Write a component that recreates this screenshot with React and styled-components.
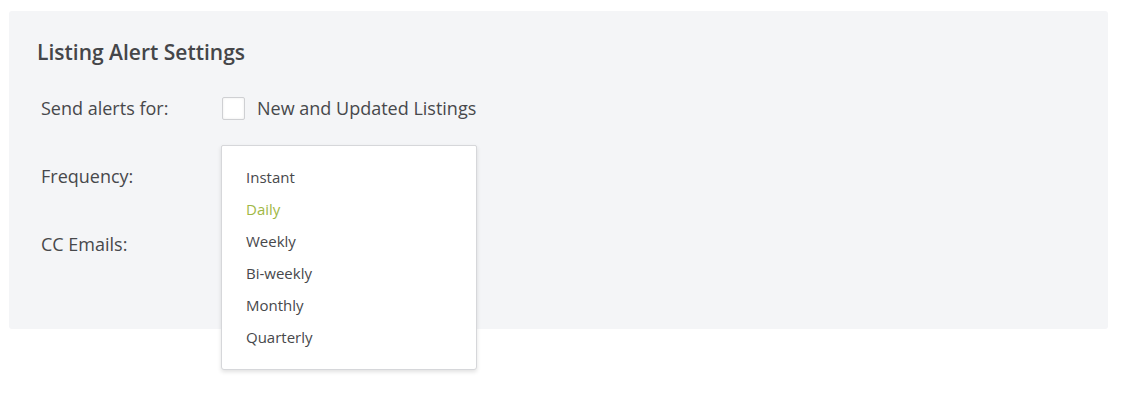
import React from "react";
import styled, { createGlobalStyle } from "styled-components";

const Global = createGlobalStyle`
  html, body { margin: 0; padding: 0; background: #ffffff; }
  body { font-family: "Open Sans", "Liberation Sans", sans-serif; color: #444548; }
`;

const Page = styled.div`
  min-height: 400px;
  box-sizing: border-box;
  padding: 11px 27px 0 9px;
`;

const Panel = styled.section`
  background: #f4f5f7;
  border-radius: 3px;
  height: 318px;
  box-sizing: border-box;
  padding: 28px 28px 0 28px;
`;

const Title = styled.h2`
  margin: 0;
  font-size: 21px;
  line-height: 26px;
  font-weight: 600;
  color: #454649;
`;

const Row = styled.div`
  display: flex;
  align-items: ${(p) => (p.$center ? "center" : "flex-start")};
  margin-top: ${(p) => p.$mt}px;
  padding-left: 4px;
`;

const Label = styled.div`
  width: 180px;
  flex: none;
  font-size: 18px;
  line-height: 24px;
  color: #47484b;
  padding-top: ${(p) => p.$pt || 0}px;
`;

const CheckWrap = styled.label`
  display: flex;
  align-items: center;
  gap: 12px;
  font-size: 18px;
  line-height: 24px;
  color: #47484b;
`;

const Box = styled.span`
  width: 21px;
  height: 21px;
  border: 1px solid #cfd0d3;
  border-radius: 2px;
  background: #ffffff;
  box-shadow: inset 0 0 3px rgba(0, 0, 0, 0.08);
  margin-left: 1px;
`;

const SelectWrap = styled.div`
  position: relative;
  width: 256px;
`;

const SelectBox = styled.div`
  height: 47px;
  box-sizing: border-box;
  border: 1px solid #c4c5c8;
  border-radius: 3px;
  background: #ffffff;
`;

const Input = styled.div`
  width: 256px;
  height: 48px;
  box-sizing: border-box;
  border: 1px solid #c4c5c8;
  border-radius: 3px;
  background: #ffffff;
`;

const Menu = styled.ul`
  position: absolute;
  top: 0;
  left: 0;
  z-index: 5;
  width: 256px;
  box-sizing: border-box;
  margin: 0;
  padding: 15px 0 16px 0;
  list-style: none;
  background: #ffffff;
  border: 1px solid #d6d7da;
  border-radius: 2px 2px 3px 3px;
  box-shadow: 0 2px 4px rgba(0, 0, 0, 0.12);
`;

const Item = styled.li`
  padding-left: 24px;
  font-size: 15px;
  line-height: 32px;
  color: ${(p) => (p.$active ? "#9fb845" : "#47484b")};
`;

const options = ["Instant", "Daily", "Weekly", "Bi-weekly", "Monthly", "Quarterly"];

export default function App() {
  return (
    <>
      <Global />
      <Page>
        <Panel>
          <Title>Listing Alert Settings</Title>
          <Row $mt={31} $center>
            <Label>Send alerts for:</Label>
            <CheckWrap>
              <Box />
              New and Updated Listings
            </CheckWrap>
          </Row>
          <Row $mt={25}>
            <Label $pt={19}>Frequency:</Label>
            <SelectWrap>
              <SelectBox />
              <Menu>
                {options.map((o) => (
                  <Item key={o} $active={o === "Daily"}>
                    {o}
                  </Item>
                ))}
              </Menu>
            </SelectWrap>
          </Row>
          <Row $mt={35}>
            <Label $pt={5}>CC Emails:</Label>
            <Input />
          </Row>
        </Panel>
      </Page>
    </>
  );
}
